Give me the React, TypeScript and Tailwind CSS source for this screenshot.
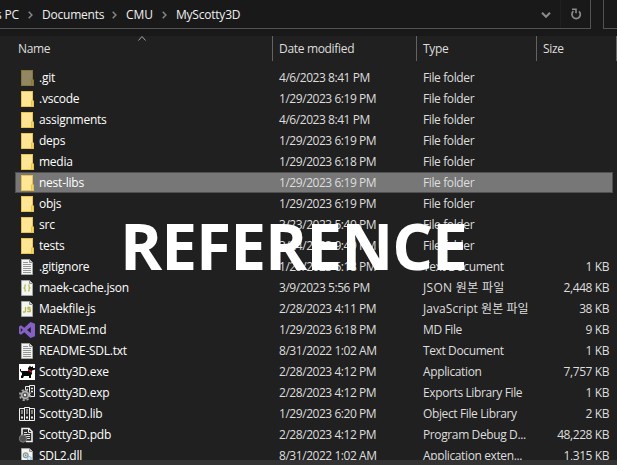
import React from "react";

type Kind = "git" | "folder" | "text" | "json" | "js" | "vs" | "exe" | "exp" | "lib" | "pdb" | "dll";

const files: [Kind, string, string, string, string][] = [
  ["git", ".git", "4/6/2023 8:41 PM", "File folder", ""],
  ["folder", ".vscode", "1/29/2023 6:19 PM", "File folder", ""],
  ["folder", "assignments", "4/6/2023 8:41 PM", "File folder", ""],
  ["folder", "deps", "1/29/2023 6:19 PM", "File folder", ""],
  ["folder", "media", "1/29/2023 6:18 PM", "File folder", ""],
  ["folder", "nest-libs", "1/29/2023 6:19 PM", "File folder", ""],
  ["folder", "objs", "1/29/2023 6:19 PM", "File folder", ""],
  ["folder", "src", "3/23/2023 5:49 PM", "File folder", ""],
  ["folder", "tests", "3/24/2023 9:49 PM", "File folder", ""],
  ["text", ".gitignore", "1/29/2023 6:18 PM", "Text Document", "1 KB"],
  ["json", "maek-cache.json", "3/9/2023 5:56 PM", "JSON 원본 파일", "2,448 KB"],
  ["js", "Maekfile.js", "2/28/2023 4:11 PM", "JavaScript 원본 파일", "38 KB"],
  ["vs", "README.md", "1/29/2023 6:18 PM", "MD File", "9 KB"],
  ["text", "README-SDL.txt", "8/31/2022 1:02 AM", "Text Document", "1 KB"],
  ["exe", "Scotty3D.exe", "2/28/2023 4:12 PM", "Application", "7,757 KB"],
  ["exp", "Scotty3D.exp", "2/28/2023 4:12 PM", "Exports Library File", "1 KB"],
  ["lib", "Scotty3D.lib", "1/29/2023 6:20 PM", "Object File Library", "2 KB"],
  ["pdb", "Scotty3D.pdb", "2/28/2023 4:12 PM", "Program Debug D...", "48,228 KB"],
  ["dll", "SDL2.dll", "8/31/2022 1:02 AM", "Application exten...", "1,315 KB"],
];

function Page({ children }: { children?: React.ReactNode }) {
  return (
    <>
      <path d="M2.5.5h8l3 3v12h-11z" fill="#f4f5f3" stroke="#a5a7a5" />
      <path d="M10.5.5v3h3" fill="#d5d7d5" stroke="#8c8e8c" />
      {children}
    </>
  );
}

function FileIcon({ kind }: { kind: Kind }) {
  return (
    <svg viewBox="0 0 16 16" className="h-4 w-4 shrink-0">
      {(kind === "folder" || kind === "git") && (
        <g opacity={kind === "git" ? 0.52 : 1}>
          <path d="M2 0h12v9l1 1v6H2z" fill="#e9c44c" />
          <path d="M3 1h10v8l-1 1v5H3z" fill={kind === "git" ? "#f9e6a0" : "#ffe694"} />
          <path d="M13 10h1v5h-1z" fill="#f5d568" />
        </g>
      )}
      {kind === "text" && (
        <Page>
          <path d="M4 3.5h5M4 5.5h8M4 7.5h8M4 9.5h8M4 11.5h8M4 13.5h8" stroke="#949694" />
        </Page>
      )}
      {kind === "json" && (
        <Page>
          <path d="M7 5H6v2L5 8l1 1v2h1M9 5h1v2l1 1-1 1v2H9" fill="none" stroke="#b9b94a" strokeWidth="1.1" />
        </Page>
      )}
      {kind === "js" && (
        <Page>
          <path d="M6.5 6v4.2q0 .8-.8.8H4M11.5 6.5H9v1.7h2.2v2.3H8.2" fill="none" stroke="#b9b94a" strokeWidth="1.3" />
        </Page>
      )}
      {kind === "vs" && (
        <path
          d="M11.5 0 16 1.8v12.4L11.5 16 5.3 10.2 2 12.7 0 11.5v-7l2-1.2 3.3 2.5zM11.8 5 8 8l3.8 3zM1.8 6v4l2-2z"
          fill="#8661c5"
          fillRule="evenodd"
        />
      )}
      {kind === "exe" && (
        <>
          <path d="M0 0h16v16H0z" fill="#fff" />
          <path d="M1 5h1v2h7V4l1-1 1-1.5 1 1.5h1l1-1v2h2v1.5l-3 1V10l-1 1v3h-2v-2H5l-1 2H2v-2l1-1V9L1 7z" fill="#080808" />
          <path d="m9 5 4 2.5V9L9 6.5z" fill="#ce2338" />
        </>
      )}
      {kind === "exp" && (
        <>
          <path d="M6.5 5V1.5h4V11M10.5 2V.5h5v11H11" fill="#282828" stroke="#eee" />
          <path d="M12 3.5h2M12 6.5h2M8 4.5h1" stroke="#eee" strokeWidth="1.4" />
          <circle cx="6" cy="10" r="5.2" fill="none" stroke="#aaa" strokeWidth="1.6" strokeDasharray="2.2 1.88" />
          <circle cx="6" cy="10" r="3.5" fill="#555" stroke="#aaa" strokeWidth="1.8" />
          <circle cx="6" cy="10" r="1.2" fill="#eee" />
        </>
      )}
      {kind === "lib" && (
        <>
          <path d="M.5 2.5h5v12h-5zM10.5 2.5h5v12h-5zM5.5 1.5h5v13h-5z" fill="#242424" stroke="#f0f0f0" />
          <path d="M3 4v4M8 3v5M13 4v4" stroke="#ddd" />
          <path d="M2 11.5h2M7 11.5h2M12 11.5h2" stroke="#eee" strokeWidth="2" />
        </>
      )}
      {kind === "pdb" && (
        <>
          <path d="M3 12V1.5h7l3 3v10H7" fill="#2b2b2b" stroke="#eee" strokeWidth="1.6" />
          <path d="M9.5 1v4.5H13" fill="none" stroke="#eee" />
          <path d="M5 5.5h3M5 7.5h6M7 9.5h4M8 11.5h3" stroke="#ddd" />
          <circle cx="4" cy="11.5" r="3.7" fill="#525252" stroke="#999" strokeWidth=".7" />
        </>
      )}
      {kind === "dll" && (
        <Page>
          <circle cx="6.7" cy="7.2" r="2.4" fill="#d8dde0" stroke="#8d969b" strokeWidth="1.2" />
          <circle cx="6.7" cy="7.2" r=".8" fill="#777" />
          <circle cx="10.3" cy="10.5" r="2" fill="#d7eaf5" stroke="#83b5d1" />
        </Page>
      )}
    </svg>
  );
}

function typeClass(kind: Kind) {
  if (kind === "json") return "w-[120px] whitespace-nowrap tracking-[0.3px]";
  if (kind === "js") return "w-[120px] whitespace-nowrap tracking-[0.05px]";
  return "w-[120px] whitespace-nowrap tracking-[-0.38px]";
}

export default function App() {
  return (
    <div className="relative flex h-[465px] w-[617px] flex-col overflow-hidden bg-[#202020] font-['Open_Sans','Noto_Sans_CJK_KR',sans-serif] text-[12px] leading-[21px] text-[#dedede]">
      <div className="flex h-9 shrink-0 bg-[#191919]">
        <div className="flex h-[29px] w-[591px] border-r border-b border-[#535353] tracking-[-0.22px] text-[#f0f0f0]">
          <nav className="flex h-7 flex-1 items-center whitespace-pre">
            <span className="-ml-[4px] w-[32px]">s PC</span>
            <Chevron />
            <span className="ml-[9px] w-[70px]">Documents</span>
            <Chevron />
            <span className="ml-[9px] w-[36px] tracking-[-0.1px]">CMU</span>
            <Chevron />
            <span className="ml-[9px]">MyScotty3D</span>
          </nav>
          <div className="flex w-[19px] items-center">
            <svg viewBox="0 0 10 6" className="mt-[2px] h-[6px] w-[10px]">
              <path d="m1 .8 4 4 4-4" fill="none" stroke="#8c8c8c" strokeWidth="2" />
            </svg>
          </div>
          <div className="flex w-[30px] items-center border-l border-[#202020] pl-[9px]">
            <svg viewBox="0 0 12 12" className="h-3 w-3">
              <path d="M9 3.3A4.2 4.2 0 1 1 3.4 3.2" fill="none" stroke="#8c8c8c" strokeWidth="1.7" />
              <path d="M2 1.2h4v4" fill="none" stroke="#8c8c8c" strokeWidth="1.6" />
            </svg>
          </div>
        </div>
        <div className="ml-3 h-[29px] flex-1 border-b border-l border-[#535353]" />
      </div>

      <div className="flex h-[25px] shrink-0 leading-[25px] tracking-[-0.32px]">
        <div className="flex w-[273px] border-r border-[#636363] pl-[18px]">
          <span className="w-[120px]">Name</span>
          <svg viewBox="0 0 8 5" className="h-[5px] w-2">
            <path d="m.5 4.5 3.5-4 3.5 4" fill="none" stroke="#a5a5a5" />
          </svg>
        </div>
        <div className="w-36 border-r border-[#636363] pl-[6px]">Date modified</div>
        <div className="w-[120px] border-r border-[#636363] pl-[6px]">Type</div>
        <div className="w-20 border-r border-[#636363] pl-[6px]">Size</div>
      </div>

      <main className="h-[399px] shrink-0 overflow-hidden pt-[6px]">
        {files.map(([kind, name, date, type, size], i) => (
          <div
            key={name}
            className={
              i === 5
                ? "ml-[15px] flex h-[21px] w-[598px] items-center bg-[#777] outline outline-1 -outline-offset-1 outline-[#505050]"
                : "ml-[15px] flex h-[21px] w-[598px] items-center"
            }
          >
            <div className="flex w-[264px] items-center gap-1 pl-1 tracking-[-0.24px] text-white">
              <FileIcon kind={kind} />
              <span>{name}</span>
            </div>
            <span className="w-36 whitespace-nowrap tracking-[-0.45px]">{date}</span>
            <span className={typeClass(kind)}>{type}</span>
            <span className="w-[66px] whitespace-nowrap text-right tracking-[-0.42px]">{size}</span>
          </div>
        ))}
      </main>
      <footer className="h-[5px] bg-[#333]" />
      <div className="absolute top-[202px] left-[120px] text-[64px] leading-[88px] font-bold tracking-[-1px] text-white">REFERENCE</div>
    </div>
  );
}

function Chevron() {
  return (
    <svg viewBox="0 0 5 8" className="mt-[1px] h-2 w-[5px] shrink-0">
      <path d="m.7.7 3.2 3.3-3.2 3.3" fill="none" stroke="#858585" strokeWidth="1.5" />
    </svg>
  );
}
